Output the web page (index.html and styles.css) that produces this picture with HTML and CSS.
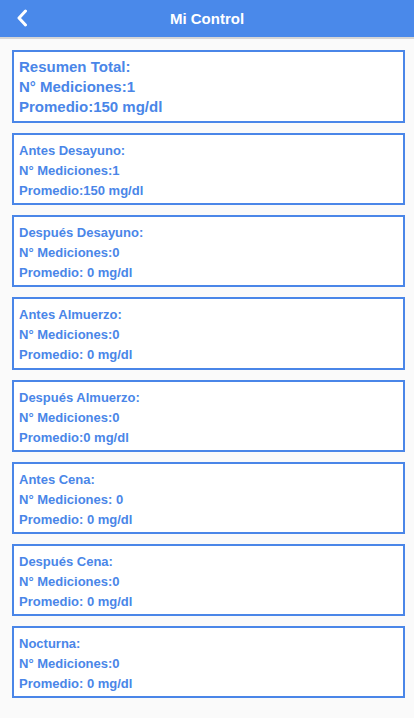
FILE: index.html
```html
<!DOCTYPE html>
<html lang="es">
<head>
<meta charset="utf-8">
<title>Mi Control</title>
<link rel="stylesheet" href="styles.css">
</head>
<body>
<header class="topbar">
  <button class="back" aria-label="Atrás">
    <svg width="12" height="18" viewBox="0 0 12 18"><path d="M9.5 2 L3 9 L9.5 16" fill="none" stroke="#fff" stroke-width="3" stroke-linecap="round" stroke-linejoin="round"/></svg>
  </button>
  <h1 class="title">Mi Control</h1>
</header>
<main class="list">
  <section class="card card-total">
    <p>Resumen Total:</p>
    <p>N° Mediciones:1</p>
    <p>Promedio:150 mg/dl</p>
  </section>
  <section class="card">
    <p>Antes Desayuno:</p>
    <p>N° Mediciones:1</p>
    <p>Promedio:150 mg/dl</p>
  </section>
  <section class="card">
    <p>Después Desayuno:</p>
    <p>N° Mediciones:0</p>
    <p>Promedio: 0 mg/dl</p>
  </section>
  <section class="card">
    <p>Antes Almuerzo:</p>
    <p>N° Mediciones:0</p>
    <p>Promedio: 0 mg/dl</p>
  </section>
  <section class="card">
    <p>Después Almuerzo:</p>
    <p>N° Mediciones:0</p>
    <p>Promedio:0 mg/dl</p>
  </section>
  <section class="card">
    <p>Antes Cena:</p>
    <p>N° Mediciones: 0</p>
    <p>Promedio: 0 mg/dl</p>
  </section>
  <section class="card">
    <p>Después Cena:</p>
    <p>N° Mediciones:0</p>
    <p>Promedio: 0 mg/dl</p>
  </section>
  <section class="card">
    <p>Nocturna:</p>
    <p>N° Mediciones:0</p>
    <p>Promedio: 0 mg/dl</p>
  </section>
</main>
</body>
</html>
```

FILE: styles.css
```css
* { box-sizing: border-box; }
html, body {
  margin: 0;
  padding: 0;
  background: #fafafa;
  font-family: "Liberation Sans", Arial, sans-serif;
}
.topbar {
  position: relative;
  height: 39px;
  background: #4a89ea;
  border-bottom: 2px solid #d6d6d6;
  display: flex;
  align-items: center;
  justify-content: center;
}
.back {
  position: absolute;
  left: 15px;
  top: 8px;
  padding: 0;
  margin: 0;
  border: 0;
  background: none;
  width: 14px;
  height: 20px;
  display: flex;
  align-items: center;
  justify-content: center;
}
.title {
  margin: 0;
  color: #fff;
  font-size: 15px;
  font-weight: bold;
  line-height: 37px;
}
.list {
  padding: 11px 9px 10px 12px;
  display: flex;
  flex-direction: column;
  gap: 10px;
}
.card {
  background: #fff;
  border: 2px solid #4a86e8;
  padding: 6px 6px 2.2px 5px;
  color: #4a86e8;
  font-weight: bold;
  font-size: 13px;
  line-height: 20px;
}
.card p { margin: 0; }
.card-total {
  font-size: 15px;
  padding-top: 5px;
  padding-bottom: 4px;
}
```
